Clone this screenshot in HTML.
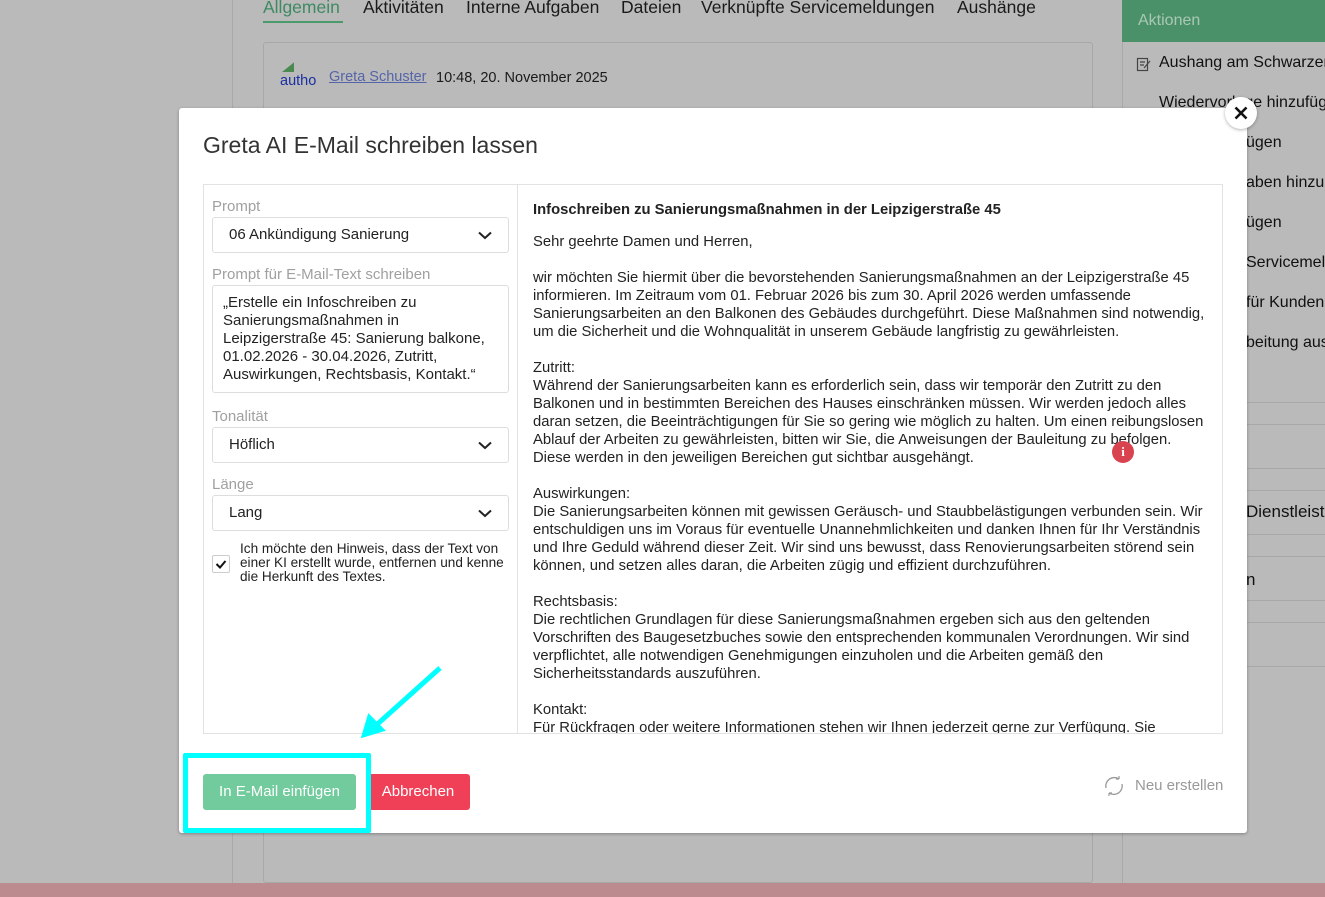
<!DOCTYPE html>
<html><head><meta charset="utf-8"><style>
*{box-sizing:border-box;margin:0;padding:0}
body{width:1325px;height:897px;overflow:hidden;background:#bababa;font-family:"Liberation Sans",sans-serif;position:relative;color:#222}
.abs{position:absolute}
.tab{position:absolute;top:-3px;font-size:17.5px;color:#1a1a1a}
.rp{position:absolute;left:1137px;font-size:16px;color:#111;white-space:nowrap}
.hl{position:absolute;left:1122px;width:203px;height:1px;background:#a8a8a8}
.lbl{position:absolute;left:212px;font-size:15px;color:#a0a0a0}
.sel{position:absolute;left:212px;width:297px;height:36px;border:1px solid #ddd;border-radius:3px;font-size:15px;padding:8px 16px;color:#222;background:#fff}
.sel svg{position:absolute;right:16px;top:13px}
.txt{position:absolute;left:533px;width:680px;font-size:14.8px;line-height:18px;color:#222}
</style></head><body>
<div class="abs" style="left:232px;top:0;width:1px;height:883px;background:#a9a9a9"></div>
<div class="tab" style="left:263px;color:#3f8a63">Allgemein</div>
<div class="abs" style="left:263px;top:21px;width:80px;height:2px;background:#4a9a6c"></div>
<div class="tab" style="left:363px">Aktivitäten</div>
<div class="tab" style="left:466px">Interne Aufgaben</div>
<div class="tab" style="left:621px">Dateien</div>
<div class="tab" style="left:701px">Verknüpfte Servicemeldungen</div>
<div class="tab" style="left:957px">Aushänge</div>
<div class="abs" style="left:263px;top:42px;width:830px;height:841px;border:1px solid #a8a8a8;border-radius:3px"></div>
<div class="abs" style="left:282px;top:60px;width:12px;height:12px;background:#4a8a50;clip-path:polygon(0 100%,100% 20%,100% 100%)"></div>
<div class="abs" style="left:280px;top:73px;font-size:14.5px;color:#1a2fa0">autho</div>
<div class="abs" style="left:329px;top:69px;font-size:14.5px;color:#5565a8;text-decoration:underline">Greta Schuster</div>
<div class="abs" style="left:436px;top:70px;font-size:14.5px;color:#1a1a1a">10:48, 20. November 2025</div>
<div class="abs" style="left:1122px;top:0;width:203px;height:42px;background:#4a9068"></div>
<div class="abs" style="left:1138px;top:12px;font-size:16px;color:#a9c9b4">Aktionen</div>
<div class="abs" style="left:1122px;top:42px;width:203px;height:841px;border-left:1px solid #a8a8a8"></div>
<svg class="abs" style="left:1136px;top:56px" width="16" height="16"><rect x="1.5" y="2.5" width="10" height="12" fill="none" stroke="#444" stroke-width="1.2"/><path d="M4 6h5M4 9h4M8 12l6-7" stroke="#444" stroke-width="1.2"/></svg>
<div class="rp" style="top:54px;left:1159px">Aushang am Schwarzen</div>
<div class="rp" style="top:94px;left:1159px">Wiedervorlage hinzufüg</div>
<div class="rp" style="top:134px;left:1246px">ügen</div>
<div class="rp" style="top:174px;left:1246px">aben hinzu</div>
<div class="rp" style="top:214px;left:1246px">ügen</div>
<div class="rp" style="top:254px;left:1246px">Servicemeld</div>
<div class="rp" style="top:294px;left:1246px">für Kunden</div>
<div class="rp" style="top:334px;left:1246px">beitung aus</div>
<div class="rp" style="top:502px;left:1246px;font-size:17px">Dienstleiste</div>
<div class="rp" style="top:570px;left:1246px;font-size:17px">n</div>
<div class="hl" style="top:402px"></div><div class="hl" style="top:424px"></div>
<div class="hl" style="top:468px"></div><div class="hl" style="top:490px"></div>
<div class="hl" style="top:534px"></div><div class="hl" style="top:556px"></div>
<div class="hl" style="top:600px"></div><div class="hl" style="top:622px"></div><div class="hl" style="top:666px"></div>
<div class="abs" style="left:0;top:883px;width:1325px;height:14px;background:#bb8b90"></div>

<div class="abs" style="left:179px;top:108px;width:1068px;height:725px;background:#fff;border-radius:3px;box-shadow:0 1px 3px rgba(0,0,0,.3)"></div>
<div class="abs" style="left:1225px;top:97px;width:32px;height:32px;border-radius:50%;background:#fff;box-shadow:0 1px 3px rgba(0,0,0,.3)">
<svg width="32" height="32"><path d="M10.5 10.5L21.5 21.5M21.5 10.5L10.5 21.5" stroke="#111" stroke-width="2.6"/></svg></div>
<div class="abs" style="left:203px;top:132px;font-size:23px;color:#333">Greta AI E-Mail schreiben lassen</div>
<div class="abs" style="left:203px;top:184px;width:1020px;height:550px;border:1px solid #e2e2e2"></div>
<div class="abs" style="left:517px;top:184px;width:1px;height:550px;background:#e2e2e2"></div>

<div class="lbl" style="top:198px">Prompt</div>
<div class="sel" style="top:217px">06 Ankündigung Sanierung<svg width="14" height="9"><path d="M1 1.5L7 7L13 1.5" fill="none" stroke="#222" stroke-width="2"/></svg></div>
<div class="lbl" style="top:266px">Prompt für E-Mail-Text schreiben</div>
<div class="abs" style="left:212px;top:285px;width:297px;height:108px;border:1px solid #ddd;border-radius:3px;font-size:15px;line-height:18px;padding:8px 10px;color:#222">„Erstelle ein Infoschreiben zu Sanierungsmaßnahmen in Leipzigerstraße 45: Sanierung balkone, 01.02.2026 - 30.04.2026, Zutritt, Auswirkungen, Rechtsbasis, Kontakt.“</div>
<div class="lbl" style="top:408px">Tonalität</div>
<div class="sel" style="top:427px">Höflich<svg width="14" height="9"><path d="M1 1.5L7 7L13 1.5" fill="none" stroke="#222" stroke-width="2"/></svg></div>
<div class="lbl" style="top:476px">Länge</div>
<div class="sel" style="top:495px">Lang<svg width="14" height="9"><path d="M1 1.5L7 7L13 1.5" fill="none" stroke="#222" stroke-width="2"/></svg></div>
<div class="abs" style="left:212px;top:555px;width:18px;height:18px;border:1px solid #ccc;border-radius:2px"><svg width="16" height="16"><path d="M3.5 8L7 11.5L12.5 5" fill="none" stroke="#111" stroke-width="2"/></svg></div>
<div class="abs" style="left:240px;top:542px;width:275px;font-size:13.6px;line-height:14px;color:#222">Ich möchte den Hinweis, dass der Text von einer KI erstellt wurde, entfernen und kenne die Herkunft des Textes.</div>

<div class="abs" style="left:518px;top:185px;width:704px;height:548px;overflow:hidden">
<div class="txt" style="left:15px;top:16px;font-weight:bold">Infoschreiben zu Sanierungsmaßnahmen in der Leipzigerstraße 45</div>
<div class="txt" style="left:15px;top:48px">Sehr geehrte Damen und Herren,</div>
<div class="txt" style="left:15px;top:84px">wir möchten Sie hiermit über die bevorstehenden Sanierungsmaßnahmen an der Leipzigerstraße 45<br>informieren. Im Zeitraum vom 01. Februar 2026 bis zum 30. April 2026 werden umfassende<br>Sanierungsarbeiten an den Balkonen des Gebäudes durchgeführt. Diese Maßnahmen sind notwendig,<br>um die Sicherheit und die Wohnqualität in unserem Gebäude langfristig zu gewährleisten.</div>
<div class="txt" style="left:15px;top:174px">Zutritt:<br>Während der Sanierungsarbeiten kann es erforderlich sein, dass wir temporär den Zutritt zu den<br>Balkonen und in bestimmten Bereichen des Hauses einschränken müssen. Wir werden jedoch alles<br>daran setzen, die Beeinträchtigungen für Sie so gering wie möglich zu halten. Um einen reibungslosen<br>Ablauf der Arbeiten zu gewährleisten, bitten wir Sie, die Anweisungen der Bauleitung zu befolgen.<br>Diese werden in den jeweiligen Bereichen gut sichtbar ausgehängt.</div>
<div class="txt" style="left:15px;top:300px">Auswirkungen:<br>Die Sanierungsarbeiten können mit gewissen Geräusch- und Staubbelästigungen verbunden sein. Wir<br>entschuldigen uns im Voraus für eventuelle Unannehmlichkeiten und danken Ihnen für Ihr Verständnis<br>und Ihre Geduld während dieser Zeit. Wir sind uns bewusst, dass Renovierungsarbeiten störend sein<br>können, und setzen alles daran, die Arbeiten zügig und effizient durchzuführen.</div>
<div class="txt" style="left:15px;top:408px">Rechtsbasis:<br>Die rechtlichen Grundlagen für diese Sanierungsmaßnahmen ergeben sich aus den geltenden<br>Vorschriften des Baugesetzbuches sowie den entsprechenden kommunalen Verordnungen. Wir sind<br>verpflichtet, alle notwendigen Genehmigungen einzuholen und die Arbeiten gemäß den<br>Sicherheitsstandards auszuführen.</div>
<div class="txt" style="left:15px;top:516px">Kontakt:<br>Für Rückfragen oder weitere Informationen stehen wir Ihnen jederzeit gerne zur Verfügung. Sie</div>
</div>
<div class="abs" style="left:1112px;top:441px;width:22px;height:22px;border-radius:50%;background:#d9434f;color:#fff;font-weight:bold;font-size:13px;text-align:center;line-height:22px;font-family:'Liberation Serif',serif">i</div>

<div class="abs" style="left:203px;top:774px;width:153px;height:36px;background:#71cb9c;border-radius:3px;color:#fff;font-size:15px;text-align:center;line-height:36px">In E-Mail einfügen</div>
<div class="abs" style="left:366px;top:774px;width:104px;height:36px;background:#f04058;border-radius:3px;color:#fff;font-size:15px;text-align:center;line-height:36px">Abbrechen</div>
<div class="abs" style="left:183px;top:753px;width:188px;height:80px;border:5px solid #00ffff;border-radius:2px"></div>
<svg class="abs" style="left:355px;top:660px" width="95" height="85"><path d="M85 8L18 68" stroke="#00ffff" stroke-width="5" fill="none"/><path d="M8 76L14 56L28 70Z" fill="#00ffff" stroke="#00ffff" stroke-width="3"/></svg>
<svg class="abs" style="left:1102px;top:774px" width="24" height="24"><path d="M4 14A8.5 8.5 0 0 1 17 5" fill="none" stroke="#999" stroke-width="1.3"/><path d="M20 10A8.5 8.5 0 0 1 7 19" fill="none" stroke="#999" stroke-width="1.3"/><path d="M17 5l0-3M17 5l-3 0M7 19l0 3M7 19l3 0" stroke="#999" stroke-width="1.2"/></svg>
<div class="abs" style="left:1135px;top:777px;font-size:15px;color:#999">Neu erstellen</div>
</body></html>
